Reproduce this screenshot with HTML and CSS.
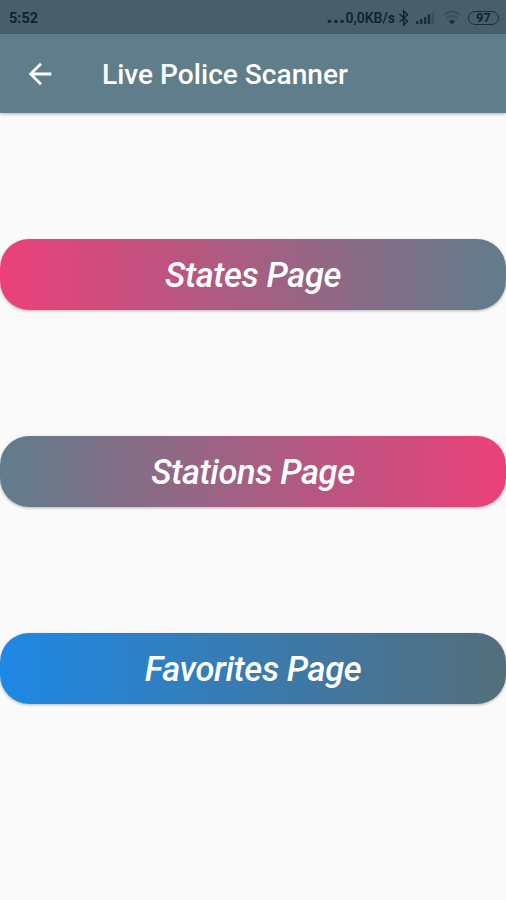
FILE: index.html
```html
<!DOCTYPE html>
<html lang="en">
<head>
<meta charset="utf-8">
<title>Live Police Scanner</title>
<link rel="stylesheet" href="styles.css">
</head>
<body>
<div class="status">
  <span class="time">5:52</span>
  <div class="indicators">
    <span class="dots">...</span>
    <span class="speed">0,0KB/s</span>
    <svg class="bluetooth" width="12" height="18" viewBox="0 0 12 18"><path d="M1.5 5L9.5 12.3L5.7 16V2L9.5 5.7L1.5 13"/></svg>
    <svg class="signal" width="19" height="14" viewBox="0 0 19 14"><path d="M0 10h2.6v3H0zM4 8h2.6v5H4zM8 6h2.4v7H8zM11.8 3.5h2.4V13h-2.4z"/><path class="faint" d="M15.6 1H18v12h-2.4z"/></svg>
    <svg class="wifi" width="18" height="15" viewBox="0 0 18 15"><path class="arc" d="M1 5Q9-2 17 5M3.5 8Q9 3.5 14.5 8"/><path d="M6 11Q9 9 12 11L9 14.5z"/></svg>
    <span class="battery">97</span>
  </div>
</div>
<header class="bar">
  <svg class="back" width="34" height="34" viewBox="0 0 24 24"><path d="M20 11H7.83l5.59-5.59L12 4l-8 8 8 8 1.41-1.41L7.83 13H20v-2z"/></svg>
  <h1>Live Police Scanner</h1>
</header>
<main>
  <button class="states">States Page</button>
  <button class="stations">Stations Page</button>
  <button class="favorites">Favorites Page</button>
</main>
</body>
</html>
```
FILE: styles.css
```css
* { box-sizing: border-box; }
body {
  margin: 0;
  height: 900px;
  display: flex;
  flex-direction: column;
  overflow: hidden;
  background: #fafafa;
  font-family: Roboto, sans-serif;
}
.status {
  flex: none;
  height: 34px;
  padding: 1px 7px 0 9px;
  display: flex;
  align-items: center;
  justify-content: space-between;
  background: #485f6b;
  color: #12232d;
  font-size: 14px;
  font-weight: 700;
}
.time { font-size: 14.5px; padding-top: 1px; }
.indicators { display: flex; align-items: center; }
.dots { font-size: 22px; line-height: 14px; margin-top: -3px; }
.speed { font-size: 14px; font-weight: 600; }
.bluetooth { margin-left: 3px; fill: none; stroke: #12232d; stroke-width: 1.5; }
.signal { margin-left: 6px; fill: #1b2e38; }
.wifi { margin-left: 8px; fill: #1b2e38; }
.faint { fill: #3a505c; }
.arc { fill: none; stroke: #3a505c; stroke-width: 2; }
.battery {
  width: 31px;
  height: 14px;
  margin-left: 7px;
  border: 1.5px solid #1b2e38;
  border-radius: 7px;
  font-size: 12.5px;
  line-height: 12px;
  text-align: center;
}
.bar {
  flex: none;
  height: 79px;
  padding-left: 23px;
  display: flex;
  align-items: center;
  background: #607d8b;
  box-shadow: 0 1px 3px rgba(0, 0, 0, 0.3);
  color: #fff;
}
.back { fill: #fff; }
h1 {
  margin: 2px 0 0 45px;
  font-size: 28.1px;
  font-weight: 500;
}
main {
  flex: 1;
  padding-top: 126.3px;
  display: flex;
  flex-direction: column;
  gap: 126.5px;
}
button {
  width: 100%;
  height: 70.5px;
  padding: 0;
  border: 0;
  border-radius: 29px;
  box-shadow: 0 1px 3px rgba(0, 0, 0, 0.28);
  color: #fff;
  font: italic 500 34.5px Roboto, sans-serif;
  letter-spacing: -0.4px;
}
.states { background: linear-gradient(90deg, #ec407a, #607d8b); }
.stations { background: linear-gradient(90deg, #607d8b, #ec407a); }
.favorites { background: linear-gradient(90deg, #1e88e5, #546e7a); }
```
